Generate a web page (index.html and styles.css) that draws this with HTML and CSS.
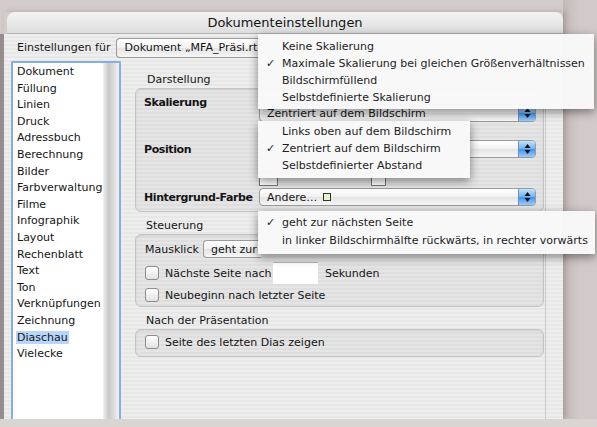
FILE: index.html
```html
<!DOCTYPE html>
<html lang="de">
<head>
  <meta charset="UTF-8">
  <title>Dokumenteinstellungen</title>
  <link rel="stylesheet" href="styles.css">
</head>
<body>

<div class="fenster">
  <div class="titel">Dokumenteinstellungen</div>
  <div class="koerper">
    <div class="kopfzeile">
      <span>Einstellungen für</span>
      <div class="popup popup-dok"><span class="popup-text">Dokument „MFA_Präsi.rt</span></div>
    </div>

    <div class="inhalt">
      <ul class="liste">
        <li>Dokument</li>
        <li>Füllung</li>
        <li>Linien</li>
        <li>Druck</li>
        <li>Adressbuch</li>
        <li>Berechnung</li>
        <li>Bilder</li>
        <li>Farbverwaltung</li>
        <li>Filme</li>
        <li>Infographik</li>
        <li>Layout</li>
        <li>Rechenblatt</li>
        <li>Text</li>
        <li>Ton</li>
        <li>Verknüpfungen</li>
        <li>Zeichnung</li>
        <li class="aktiv"><span>Diaschau</span></li>
        <li>Vielecke</li>
      </ul>

      <div class="tafel">
        <!-- Darstellung -->
        <div class="gruppe-titel">Darstellung</div>
        <div class="gruppe g-darstellung">
          <div class="zeile z-skal">
            <b class="etikett">Skalierung</b>
            <div class="popup">
              <span class="popup-text">Zentriert auf dem Bildschirm</span>
              <span class="pfeile"><svg width="7" height="10" viewBox="0 0 7 10"><path d="M3.5 0L6.5 4H0.5Z M3.5 10L6.5 6H0.5Z" fill="#111"/></svg></span>
            </div>
          </div>
          <div class="zeile z-pos">
            <b class="etikett">Position</b>
            <div class="popup">
              <span class="popup-text"></span>
              <span class="pfeile"><svg width="7" height="10" viewBox="0 0 7 10"><path d="M3.5 0L6.5 4H0.5Z M3.5 10L6.5 6H0.5Z" fill="#111"/></svg></span>
            </div>
          </div>
          <div class="zeile z-abstand">
            <span class="etikett"></span>
            <span class="feldchen"></span>
            <span class="feldchen feldchen-2"></span>
          </div>
          <div class="zeile z-farbe">
            <b class="etikett">Hintergrund-Farbe</b>
            <div class="popup">
              <span class="popup-text">Andere… <span class="farbe"></span></span>
              <span class="pfeile"><svg width="7" height="10" viewBox="0 0 7 10"><path d="M3.5 0L6.5 4H0.5Z M3.5 10L6.5 6H0.5Z" fill="#111"/></svg></span>
            </div>
          </div>
        </div>

        <!-- Steuerung -->
        <div class="gruppe-titel">Steuerung</div>
        <div class="gruppe g-steuerung">
          <div class="zeile z-maus">
            <span class="etikett-kurz">Mausklick</span>
            <div class="popup popup-maus"><span class="popup-text">geht zur</span></div>
          </div>
          <div class="zeile z-check1">
            <span class="box"></span>
            <span class="check-text">Nächste Seite nach</span>
            <span class="eingabe"></span>
            <span class="einheit">Sekunden</span>
          </div>
          <div class="zeile z-check2">
            <span class="box"></span>
            <span>Neubeginn nach letzter Seite</span>
          </div>
        </div>

        <!-- Nach der Präsentation -->
        <div class="gruppe-titel">Nach der Präsentation</div>
        <div class="gruppe g-nach">
          <div class="zeile z-check3">
            <span class="box"></span>
            <span>Seite des letzten Dias zeigen</span>
          </div>
        </div>
      </div>

      <div class="rand"></div>
    </div>
  </div>
</div>
<div class="fussleiste"></div>

<!-- offene Menüs -->
<div class="menu menu-skal">
  <div class="item">Keine Skalierung</div>
  <div class="item an">Maximale Skalierung bei gleichen Größenverhältnissen</div>
  <div class="item">Bildschirmfüllend</div>
  <div class="item">Selbstdefinierte Skalierung</div>
</div>

<div class="menu menu-pos">
  <div class="item">Links oben auf dem Bildschirm</div>
  <div class="item an">Zentriert auf dem Bildschirm</div>
  <div class="item">Selbstdefinierter Abstand</div>
</div>

<div class="menu menu-klick">
  <div class="item an">geht zur nächsten Seite</div>
  <div class="item">in linker Bildschirmhälfte rückwärts, in rechter vorwärts</div>
</div>

</body>
</html>
```

FILE: styles.css
```css
html, body {
  margin: 0;
  padding: 0;
}

body {
  width: 597px;
  height: 427px;
  padding-top: 12px;
  box-sizing: border-box;
  overflow: hidden;
  position: relative;
  background: linear-gradient(to right, #d4cccc 0, #d4cccc 563px, #c2b8b8 563px, #d2caca 580px);
  font-family: "DejaVu Sans", sans-serif;
  font-size: 11px;
  color: #151515;
}

.fenster {
  margin-left: 4px;
  width: 559px;
  box-shadow: 2px 0 5px rgba(90, 70, 70, 0.3);
}

.titel {
  height: 21px;
  line-height: 22px;
  text-align: center;
  font-size: 13px;
  background: linear-gradient(#f3f3f3, #dedede);
  border-radius: 8px 8px 0 0;
  border-bottom: 1px solid #b0b0b0;
  margin-left: 3px;
}

.koerper {
  background: repeating-linear-gradient(to bottom, #eeeeee 0, #eeeeee 2px, #e7e7e7 2px, #e7e7e7 4px);
  box-shadow: -4px 0 0 #968e8e;
}

.kopfzeile {
  height: 27px;
  display: flex;
  align-items: center;
  padding-left: 13px;
  gap: 6px;
}

.inhalt {
  height: 358px;
  display: flex;
}

/* Liste links */
.liste {
  margin: 0 0 0 7px;
  padding: 1px 0 0 4px;
  width: 110px;
  box-sizing: border-box;
  list-style: none;
  background: #fff;
  border: 2px solid #86afe0;
  border-bottom: none;
  border-radius: 2px 2px 0 0;
  position: relative;
}

.liste::after {
  content: "";
  position: absolute;
  top: 0;
  bottom: 0;
  right: 0;
  width: 16px;
  background: linear-gradient(to right, #f2f2f2, #c9c9c9 35%, #dedede 70%, #f4f4f4);
}

.liste li {
  line-height: 16.6px;
  height: 16.6px;
}

.aktiv span {
  background: #b7d6fc;
  padding: 0 1px;
  margin-left: -1px;
}

/* rechte Tafel */
.tafel {
  width: 425px;
  box-sizing: border-box;
  padding: 11px 0 0 14px;
  border-right: 1px solid #c8c8c8;
}

.rand {
  flex: 1;
}

.gruppe-titel {
  height: 16px;
  line-height: 16px;
  padding-left: 11px;
  margin-top: 6px;
}

.tafel > .gruppe-titel:first-child {
  margin-top: 0;
  padding-left: 12px;
}

.gruppe {
  width: 409px;
  box-sizing: border-box;
  border: 1px solid #c4c4c4;
  border-radius: 6px;
  background: rgba(0, 0, 0, 0.035);
  box-shadow: inset 0 1px 2px rgba(0, 0, 0, 0.08);
  padding: 0 7px 0 8px;
}

.g-darstellung { height: 124px; }
.g-steuerung { height: 73px; padding-top: 5px; }
.g-nach { height: 28px; padding-top: 4px; }

.zeile {
  display: flex;
  align-items: center;
}

.etikett {
  width: 115px;
  flex: none;
  font-weight: bold;
  letter-spacing: -0.4px;
  white-space: nowrap;
}

.z-skal {
  height: 33px;
  align-items: flex-start;
}

.z-skal .etikett {
  margin-top: 6px;
  line-height: 16px;
}

.z-skal .popup {
  margin-top: 15px;
}

.z-pos { margin-top: 18px; height: 18px; }
.z-abstand { margin-top: 14px; height: 13px; }
.z-farbe { margin-top: 3px; height: 18px; }

.feldchen {
  width: 17px;
  height: 12px;
  background: #fff;
  border: 1px solid #777;
}

.feldchen-2 {
  margin-left: 93px;
  width: 13px;
}

/* Popup-Knöpfe */
.popup {
  flex: 1;
  height: 18px;
  box-sizing: border-box;
  display: flex;
  align-items: center;
  background: linear-gradient(#ffffff, #f1f1f1 50%, #e4e4e4 51%, #f6f6f6);
  border: 1px solid #9a9a9a;
  border-radius: 4px;
  overflow: hidden;
}

.popup-text {
  flex: 1;
  padding-left: 7px;
  white-space: nowrap;
  overflow: hidden;
}

.popup-dok {
  flex: none;
  width: 145px;
  height: 20px;
  border-radius: 4px 0 0 4px;
  border-right: none;
}

.popup-maus {
  flex: none;
  width: 58px;
  border-radius: 4px 0 0 4px;
  border-right: none;
}

.pfeile {
  width: 17px;
  height: 18px;
  margin-right: -1px;
  display: flex;
  align-items: center;
  justify-content: center;
  background: linear-gradient(#cfe6fd, #6fb2f5 50%, #3f92ec 51%, #a6d4ff);
  border-left: 1px solid #6c8fc0;
}

.farbe {
  display: inline-block;
  width: 6px;
  height: 6px;
  border: 1px solid #333;
  background: #dff7cf;
  margin-left: 2px;
}

.etikett-kurz {
  width: 58px;
  margin-left: 1px;
}

/* Checkboxen */
.box {
  width: 12px;
  height: 12px;
  margin: 0 6px 0 1px;
  border: 1px solid #8c8c8c;
  border-radius: 3px;
  background: linear-gradient(#ffffff, #e2e2e2);
}

.z-maus { height: 18px; }
.z-check1 { margin-top: 4px; height: 22px; }
.z-check2 { margin-top: 3px; height: 16px; }
.z-check3 { height: 16px; }

.check-text {
  width: 108px;
}

.eingabe {
  width: 45px;
  height: 22px;
  box-sizing: border-box;
  background: #fff;
  border-top: 1px solid #b0b0b0;
}

.einheit {
  margin-left: 7px;
}

.fussleiste {
  height: 8px;
  background: #d9d5d1;
}

/* geöffnete Menüs */
.menu {
  position: absolute;
  left: 258px;
  background: rgba(248, 248, 248, 0.98);
  box-shadow: 0 3px 9px rgba(0, 0, 0, 0.45);
  color: #1c1c1c;
}

.menu .item {
  position: relative;
  height: 17px;
  line-height: 17px;
  padding-left: 24px;
  white-space: nowrap;
}

.menu .an::before {
  content: "✓";
  position: absolute;
  left: 8px;
}

.menu-skal {
  top: 34px;
  width: 336px;
  padding: 4px 0 3px;
}

.menu-pos {
  top: 121px;
  width: 212px;
  padding: 2px 0 4px;
}

.menu-klick {
  top: 211px;
  width: 337px;
  padding: 3px 0 4px;
}

.menu-klick .item {
  height: 18px;
  line-height: 18px;
}
```
